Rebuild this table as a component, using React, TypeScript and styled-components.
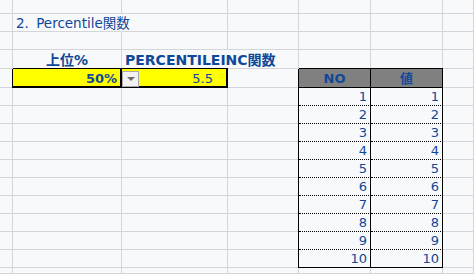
import styled, { createGlobalStyle } from 'styled-components'

const GlobalStyle = createGlobalStyle`
  html, body {
    margin: 0;
    padding: 0;
    background: #f8f9fb;
  }
  body {
    width: 474px;
    height: 274px;
    overflow: hidden;
  }
`

const GRID = '#d4d5d9'
const INK = '#0f4898'
const FONT = `"DejaVu Sans", "Noto Sans CJK JP", sans-serif`

const Sheet = styled.div`
  display: grid;
  grid-template-columns: 13px 109px 106px 71px 72px 72px 1fr;
  grid-template-rows: 14px 18px 18px 19px 19px repeat(10, 18px) 1fr;
  width: 474px;
  height: 274px;
  background: #f8f9fb;
  font-family: ${FONT};
  font-size: 13px;
  color: ${INK};
  overflow: hidden;
`

type CellProps = {
  $noRight?: boolean
  $align?: 'left' | 'right' | 'center'
}

const Cell = styled.div<CellProps>`
  box-sizing: border-box;
  display: flex;
  align-items: flex-end;
  justify-content: ${({ $align }) =>
    $align === 'right' ? 'flex-end' : $align === 'center' ? 'center' : 'flex-start'};
  border-right: 1px solid ${({ $noRight }) => ($noRight ? 'transparent' : GRID)};
  border-bottom: 1px solid ${GRID};
  line-height: 16px;
  white-space: nowrap;
  min-width: 0;
`

const Title = styled.span`
  padding-left: 3px;
  font-size: 13.5px;
  word-spacing: 3px;
  position: relative;
  z-index: 2;
`

const HeadLabel = styled.span<{ $pad?: number }>`
  padding-left: ${({ $pad }) => $pad ?? 0}px;
  font-size: 14px;
  font-weight: 700;
  position: relative;
  z-index: 2;
`

const InputCell = styled(Cell)<{ $first?: boolean }>`
  position: relative;
  z-index: 1;
  background: #ffff00;
  border-right: 2px solid #000;
  border-bottom: 2px solid #000;
  box-shadow: 0 -1px 0 #000 ${({ $first }) => ($first ? ', -1px 0 0 #000' : '')};
  align-items: center;
  justify-content: space-between;
  padding-right: ${({ $first }) => ($first ? '3px' : '13px')};
  padding-top: 2px;
`

const Percent = styled.span`
  margin-left: auto;
  font-weight: 700;
`

const DropButton = styled.div`
  box-sizing: border-box;
  width: 17px;
  height: 16px;
  margin-top: 1px;
  background: #f2f2f2;
  border: 1px solid #a9a9a9;
  display: flex;
  align-items: center;
  justify-content: center;
`

const Caret = styled.span`
  width: 0;
  height: 0;
  border-left: 4px solid transparent;
  border-right: 4px solid transparent;
  border-top: 4px solid #6b6b6b;
`

const TableHead = styled(Cell)<{ $first?: boolean }>`
  position: relative;
  z-index: 1;
  background: #808080;
  border-right: 1px solid #000;
  border-bottom: 1px solid #000;
  box-shadow: 0 -1px 0 #000 ${({ $first }) => ($first ? ', -1px 0 0 #000' : '')};
  justify-content: center;
  font-weight: 700;
`

const TableCell = styled(Cell)<{ $first?: boolean; $last?: boolean }>`
  position: relative;
  z-index: 1;
  border-right: 1px solid #000;
  border-bottom: 1px ${({ $last }) => ($last ? 'solid' : 'dotted')} #000;
  box-shadow: ${({ $first }) => ($first ? '-1px 0 0 #000' : 'none')};
  justify-content: flex-end;
  padding-right: 3px;
`

const values = [1, 2, 3, 4, 5, 6, 7, 8, 9, 10]

function EmptyRow({ from = 0, to = 7 }: { from?: number; to?: number }) {
  const cells = []
  for (let i = from; i < to; i++) cells.push(<Cell key={i} />)
  return <>{cells}</>
}

function Row({ value, last }: { value: number; last: boolean }) {
  return (
    <>
      <EmptyRow to={4} />
      <TableCell $first $last={last}>
        {value}
      </TableCell>
      <TableCell $last={last}>{value}</TableCell>
      <Cell />
    </>
  )
}

export default function App() {
  return (
    <>
      <GlobalStyle />
      <Sheet>
        {/* row 0 (partial) */}
        <EmptyRow />

        {/* row 1: title */}
        <Cell />
        <Cell $noRight>
          <Title>2. Percentile関数</Title>
        </Cell>
        <EmptyRow from={2} />

        {/* row 2 */}
        <EmptyRow />

        {/* row 3: labels */}
        <Cell />
        <Cell $align="center">
          <HeadLabel>上位%</HeadLabel>
        </Cell>
        <Cell $noRight>
          <HeadLabel $pad={3}>PERCENTILEINC関数</HeadLabel>
        </Cell>
        <EmptyRow from={3} />

        {/* row 4: inputs + table header */}
        <Cell />
        <InputCell $first>
          <Percent>50%</Percent>
        </InputCell>
        <InputCell>
          <DropButton>
            <Caret />
          </DropButton>
          <span>5.5</span>
        </InputCell>
        <Cell />
        <TableHead $first>NO</TableHead>
        <TableHead>値</TableHead>
        <Cell />

        {values.map((v, i) => (
          <Row key={v} value={v} last={i === values.length - 1} />
        ))}

        <EmptyRow />
      </Sheet>
    </>
  )
}
